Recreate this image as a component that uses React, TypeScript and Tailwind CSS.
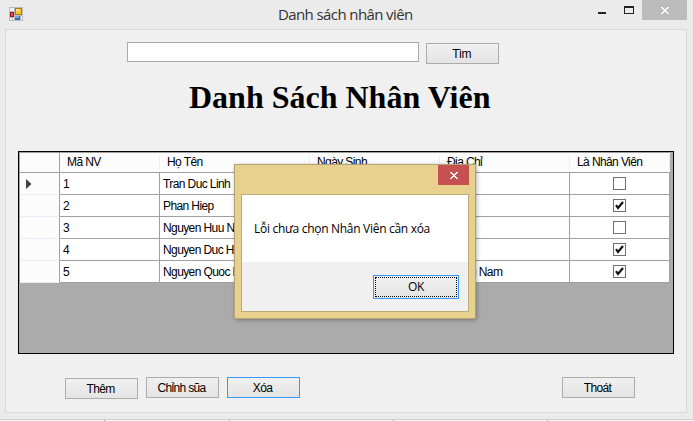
import type { ReactNode } from "react";

type Employee = { id: number; name: string; address: string; staff: boolean };

const employees: Employee[] = [
  { id: 1, name: "Tran Duc Linh", address: "", staff: false },
  { id: 2, name: "Phan Hiep", address: "", staff: true },
  { id: 3, name: "Nguyen Huu Nam", address: "", staff: false },
  { id: 4, name: "Nguyen Duc Hai", address: "", staff: true },
  { id: 5, name: "Nguyen Quoc Huy", address: "Quang Nam", staff: true },
];

const columns = "grid grid-cols-[40px_100px_150px_130px_130px_100px]";
const sans = "font-['Liberation_Sans',Arial,sans-serif]";
const segoe = "font-['Open_Sans','Noto_Sans',sans-serif]";

function FormIcon() {
  return (
    <svg width="14" height="14" viewBox="0 0 14 14" shapeRendering="crispEdges">
      <rect width="14" height="14" fill="#bdbdbd" />
      <rect x="1" y="1" width="4" height="3" fill="#f0f0f0" />
      <rect x="1" y="5" width="4" height="5" fill="#a31515" />
      <rect x="2" y="6" width="2" height="3" fill="#d8584e" />
      <rect x="1" y="11" width="2" height="2" fill="#f0f0f0" />
      <rect x="4" y="11" width="1" height="2" fill="#f0f0f0" />
      <rect x="6" y="1" width="7" height="7" fill="#b07d0c" />
      <rect x="7" y="2" width="5" height="5" fill="#f8c62f" />
      <rect x="7" y="2" width="3" height="2" fill="#fde38a" />
      <rect x="6" y="9" width="5" height="4" fill="#3768c0" />
      <rect x="6" y="9" width="4" height="2" fill="#79a9ec" />
      <rect x="12" y="9" width="1" height="4" fill="#f0f0f0" />
    </svg>
  );
}

function CloseGlyph() {
  return (
    <svg width="8" height="7" viewBox="0 0 8 7" fill="#fff" shapeRendering="crispEdges">
      <path d="M0 0h2v1h1v1h2v-1h1v-1h2v1h-1v1h-1v1h-1v1h1v1h1v1h1v1h-2v-1h-1v-1h-2v1h-1v1h-2v-1h1v-1h1v-1h1v-1h-1v-1h-1v-1h-1z" />
    </svg>
  );
}

function Button({ children, focused = false, className = "" }: { children: ReactNode; focused?: boolean; className?: string }) {
  return (
    <button
      className={`flex h-[21px] w-[73px] items-center justify-center border bg-gradient-to-b from-[#f0f0f0] to-[#e4e4e4] pr-[2px] text-[12px] leading-[14px] tracking-[-0.65px] text-black ${focused ? "border-[#3399ff]" : "border-[#acacac]"} ${className}`}
    >
      {children}
    </button>
  );
}

function CheckBox({ checked }: { checked: boolean }) {
  return (
    <svg width="13" height="13" viewBox="0 0 13 13">
      <rect x="0.5" y="0.5" width="12" height="12" fill="#fff" stroke="#707070" />
      {checked && <path d="M3 6.2 5 9 10 3" fill="none" stroke="#111" strokeWidth="2.2" />}
    </svg>
  );
}

function HeaderCell({ children }: { children?: ReactNode }) {
  return <div className="my-[2px] border-r border-[#e5effb] pl-[7px]">{children}</div>;
}

function EmployeeGrid() {
  return (
    <div className="h-[203px] w-[656px] border border-black bg-[#ababab] text-[12px] leading-[15px] tracking-[-0.6px]">
      <div className="w-[651px] border-t border-l border-[#a0a0a0]">
        <div className={`${columns} h-[20px] border-b border-[#a0a0a0] bg-[#fcfcfc]`}>
          <div className="border-r border-[#a0a0a0]" />
          <HeaderCell>Mã NV</HeaderCell>
          <HeaderCell>Họ Tên</HeaderCell>
          <HeaderCell>Ngày Sinh</HeaderCell>
          <HeaderCell>Địa Chỉ</HeaderCell>
          <HeaderCell>Là Nhân Viên</HeaderCell>
        </div>
        {employees.map((e, i) => (
          <div key={e.id} className={`${columns} h-[22px] bg-white *:border-r *:border-b *:border-[#a0a0a0]`}>
            <div className="flex items-center border-b-[#e5effb]! bg-[#fcfcfc] pl-[6px]">
              {i === 0 && (
                <svg width="6" height="10" viewBox="0 0 6 10">
                  <path d="M0 0 5.5 5 0 10z" fill="#404040" />
                </svg>
              )}
            </div>
            <div className="pt-[4px] pl-[3px]">{e.id}</div>
            <div className="overflow-hidden pt-[4px] pl-[3px] whitespace-nowrap">{e.name}</div>
            <div />
            <div className="pt-[4px] pl-[3px]">{e.address}</div>
            <div className="flex items-center justify-center">
              <CheckBox checked={e.staff} />
            </div>
          </div>
        ))}
      </div>
    </div>
  );
}

function ErrorDialog() {
  return (
    <div className="absolute top-[164px] left-[234px] h-[155px] w-[242px] border border-[#b5a16d] bg-[#e8d08f] px-[6px] shadow-[1px_1px_4px_rgba(0,0,0,0.3)]">
      <div className="flex h-[29px] justify-end">
        <button className="flex h-[20px] w-[31px] items-center justify-center bg-[#c75050]">
          <CloseGlyph />
        </button>
      </div>
      <div className="flex h-[118px] w-[228px] flex-col border border-[#bfab74] bg-[#f0f0f0]">
        <div className={`h-[67px] bg-white pt-[25px] pl-[12px] text-[12px] leading-[18px] whitespace-nowrap text-black ${segoe}`}>
          <span className="tracking-[-0.3px]">Lỗi chưa chọn Nhân Viên cần xóa</span>
        </div>
        <div className="flex justify-end pt-[13px] pr-[9px]">
          <button className="h-[24px] w-[86px] border border-[#3399ff] bg-gradient-to-b from-[#f0f0f0] to-[#e4e4e4] p-px">
            <span className={`flex h-full w-full items-center justify-center border border-dotted border-black text-[12px] leading-none tracking-[-0.4px] ${segoe}`}>OK</span>
          </button>
        </div>
      </div>
    </div>
  );
}

export default function App() {
  return (
    <div className={`relative h-[421px] w-[694px] overflow-hidden bg-[#f7f7f7] text-black ${sans}`}>
      <div className="h-[420px] border-r border-b border-[#cfcfcf] bg-[#ebebeb] pl-[5px]">
        <header className="flex h-[29px]">
          <div className="w-[273px] pt-[7px] pl-[4px]"><FormIcon /></div>
          <h1 className={`w-[313px] pt-[4px] text-[15px] leading-[21px] whitespace-nowrap text-[#333] ${segoe}`}>
            <span className="tracking-[-0.6px]">Danh sách nhân viên</span>
          </h1>
          <div className="w-[26px] pt-[12px] pl-[7px]"><div className="h-[2px] w-[8px] bg-[#222]" /></div>
          <div className="w-[25px] pt-[6px] pl-[7px]"><div className="h-[8px] w-[10px] border border-t-2 border-[#222]" /></div>
          <button className="flex h-[20px] w-[45px] items-center justify-center bg-[#bcbcbc]"><CloseGlyph /></button>
        </header>
        <main className="h-[384px] w-[682px] border border-[#d9d9d9] bg-[#f0f0f0]">
          <div className="flex gap-[7px] pt-[12px] pl-[121px]">
            <input className="h-[20px] w-[292px] border border-[#ababab] bg-white" />
            <Button className="mt-px">Tìm</Button>
          </div>
          <h2 className="h-[87px] pt-[15px] pl-[183px] font-['Liberation_Serif','Times_New_Roman',serif] text-[32px] leading-[36px] font-bold whitespace-nowrap">Danh Sách Nhân Viên</h2>
          <div className="pl-[12px]"><EmployeeGrid /></div>
          <div className="flex pt-[23px] pl-[59px]">
            <Button className="mt-px mr-[8px]">Thêm</Button>
            <Button className="mr-[8px]">Chỉnh sũa</Button>
            <Button focused>Xóa</Button>
            <Button className="ml-[262px]">Thoát</Button>
          </div>
        </main>
      </div>
      <div className="flex h-px">
        <i className="ml-[104px] w-px bg-[#999]" />
        <i className="ml-[124px] w-px bg-[#999]" />
        <i className="ml-[163px] w-px bg-[#999]" />
        <i className="ml-[153px] w-px bg-[#999]" />
      </div>
      <ErrorDialog />
    </div>
  );
}
